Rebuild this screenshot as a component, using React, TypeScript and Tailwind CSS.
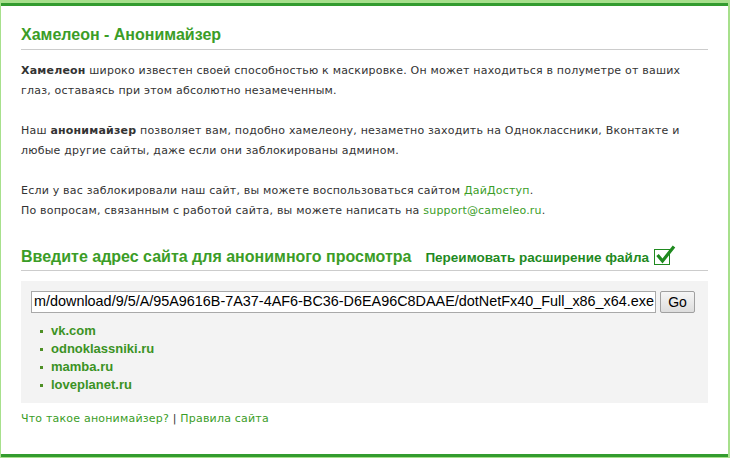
import React from "react";

const body = { fontFamily: '"DejaVu Sans", Verdana, sans-serif' };
const arial = { fontFamily: '"Liberation Sans", Arial, sans-serif' };

export default function App() {
  const sites = ["vk.com", "odnoklassniki.ru", "mamba.ru", "loveplanet.ru"];
  return (
    <div className="w-[730px] h-[458px] bg-[#a7e08c] pt-[3px] pl-[1px] pr-[2px] pb-[1px]">
      <div className="h-full bg-white border-t-[3px] border-b-[3px] border-[#339c2f] px-[20px]">
        <h1
          style={arial}
          className="pt-[20px] pb-[5px] border-b border-[#cccccc] text-[16px] leading-[18px] font-bold text-[#3b9d27]"
        >
          Хамелеон - Анонимайзер
        </h1>
        <div style={body} className="text-[11px] leading-[20px] tracking-[0.2px] text-[#333333] mt-[11px] whitespace-nowrap">
          <p>
            <b>Хамелеон</b> широко известен своей способностью к маскировке. Он может находиться в полуметре от ваших
            <br />
            глаз, оставаясь при этом абсолютно незамеченным.
          </p>
          <p className="mt-[20px]">
            Наш <b>анонимайзер</b> позволяет вам, подобно хамелеону, незаметно заходить на Одноклассники, Вконтакте и
            <br />
            любые другие сайты, даже если они заблокированы админом.
          </p>
          <p className="mt-[20px]">
            Если у вас заблокировали наш сайт, вы можете воспользоваться сайтом{" "}
            <a className="text-[#3b9d27]">ДайДоступ</a>.
            <br />
            По вопросам, связанным с работой сайта, вы можете написать на{" "}
            <a className="text-[#3b9d27]">support@cameleo.ru</a>.
          </p>
        </div>
        <div className="mt-[26px] flex items-end border-b border-[#cccccc] pb-[3px]">
          <h2 style={arial} className="text-[16px] leading-[20px] font-bold text-[#3b9d27]">
            Введите адрес сайта для анонимного просмотра
          </h2>
          <span style={arial} className="ml-[14px] text-[13.5px] leading-[18px] font-bold text-[#1f8a1f]">
            Переимовать расширение файла
          </span>
          <span className="relative ml-[5px] mb-[2px] w-[16px] h-[16px] border border-[#1f8a1f]">
            <svg className="absolute left-[1px] top-[-6px]" width="21" height="21" viewBox="0 0 21 21">
              <path d="M1.5 11 L6.5 17 L18 2.5" fill="none" stroke="#1f8a1f" strokeWidth="3.2" strokeLinejoin="miter" />
            </svg>
          </span>
        </div>
        <div className="mt-[10px] bg-[#f3f3f3] pt-[10px] pl-[10px] pb-[9px]">
          <div className="flex gap-[4px]">
            <div
              style={arial}
              className="w-[625px] h-[22px] border border-[#a9a9a9] bg-white flex justify-end items-center overflow-hidden whitespace-nowrap text-[14.4px] text-black pr-[1px]"
            >
              <span>m/download/9/5/A/95A9616B-7A37-4AF6-BC36-D6EA96C8DAAE/dotNetFx40_Full_x86_x64.exe</span>
            </div>
            <button
              style={arial}
              className="w-[35px] h-[22px] border border-[#a0a0a0] rounded-[2px] bg-gradient-to-b from-[#f6f6f6] to-[#dddddd] text-[14px] text-black"
            >
              Go
            </button>
          </div>
          <ul className="mt-[9px]">
            {sites.map((s) => (
              <li key={s} className="flex items-center h-[18px] pl-[9px]">
                <span className="w-[3px] h-[3px] bg-[#4d8f25]" />
                <span style={arial} className="ml-[8px] text-[13px] font-bold text-[#3b9224]">
                  {s}
                </span>
              </li>
            ))}
          </ul>
        </div>
        <div style={body} className="mt-[6px] text-[11px] leading-[20px] tracking-[0.2px] text-[#333333]">
          <a className="text-[#3b9d27]">Что такое анонимайзер?</a> | <a className="text-[#3b9d27]">Правила сайта</a>
        </div>
      </div>
    </div>
  );
}
